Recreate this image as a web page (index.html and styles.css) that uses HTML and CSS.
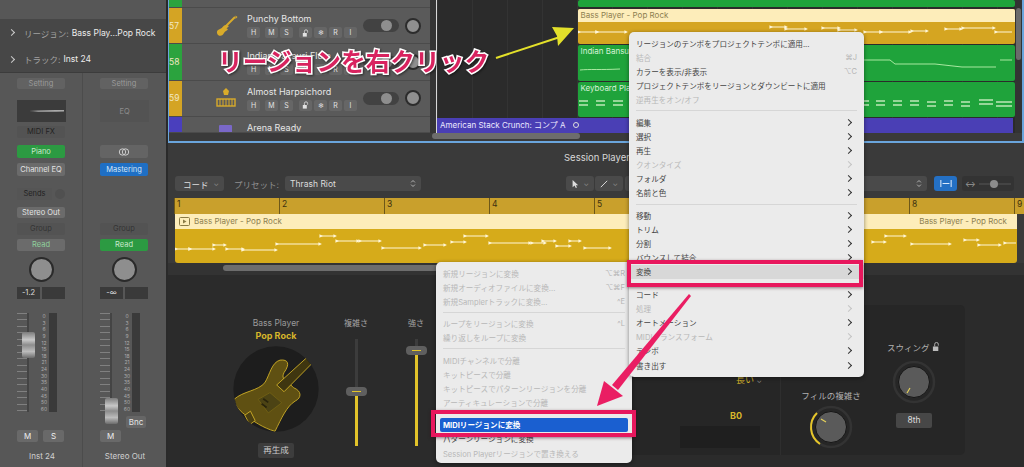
FILE: index.html
```html
<!DOCTYPE html>
<html lang="ja">
<head>
    <meta charset="UTF-8">
    <title>Session Player</title>
    <link rel="stylesheet" href="styles.css">
</head>
<body>
    <div class="app">
        <!-- left inspector -->
        <aside class="inspector">
            <div class="ins-top"></div>
            <div class="ins-row"><span class="ins-chev"></span><span class="ins-key">リージョン:</span><span class="ins-val">Bass Play...Pop Rock</span></div>
            <div class="ins-row ins-row-b"><span class="ins-chev"></span><span class="ins-key">トラック:</span><span class="ins-val">Inst 24</span></div>
            <div class="strips">
                <div class="strip">
                    <div class="btn setting">Setting</div>
                    <div class="eq-thumb"><svg viewBox="0 0 49 22" width="49" height="22"><path d="M12 11C24 10 36 10 47 10L47 11.5C34 12 22 12 12 11Z" fill="#aaa"/></svg></div>
                    <div class="btn midi">MIDI FX</div>
                    <div class="btn inst green">Piano</div>
                    <div class="btn chan light">Channel EQ</div>
                    <div class="sends"><div class="btn send-btn">Sends</div><span class="send-dot"></span></div>
                    <div class="btn out light">Stereo Out</div>
                    <div class="btn group">Group</div>
                    <div class="btn read read-off">Read</div>
                    <div class="knob-wrap"><span class="knob"></span></div>
                    <div class="values"><span class="val">-1.2</span><span class="val"></span></div>
                    <div class="fader">
                        <div class="ticks"></div>
                        <div class="fader-cap cap-a"></div>
                        <div class="scale"><span>0</span><span>3</span><span>6</span><span>9</span><span>12</span><span>15</span><span>18</span><span>21</span><span>24</span><span>30</span><span>35</span><span>40</span><span>45</span><span>50</span><span>60</span></div>
                        <div class="meter"></div>
                    </div>
                    <div class="ms"><div class="btn ms-btn">M</div><div class="btn ms-btn">S</div></div>
                    <div class="strip-name">Inst 24</div>
                </div>
                <div class="strip">
                    <div class="btn setting">Setting</div>
                    <div class="eq-thumb eq-empty">EQ</div>
                    <div class="btn midi hidden"></div>
                    <div class="btn inst link"><svg viewBox="0 0 12 8" width="12" height="8"><circle cx="4.5" cy="4" r="3.2" fill="none" stroke="#ccc"/><circle cx="7.5" cy="4" r="3.2" fill="none" stroke="#ccc"/></svg></div>
                    <div class="btn chan blue">Mastering</div>
                    <div class="sends hidden"><div class="btn send-btn"></div></div>
                    <div class="btn out hidden"></div>
                    <div class="btn group">Group</div>
                    <div class="btn read green">Read</div>
                    <div class="knob-wrap"><span class="knob"></span></div>
                    <div class="values"><span class="val">-∞</span><span class="val"></span></div>
                    <div class="fader">
                        <div class="ticks"></div>
                        <div class="fader-cap cap-b"></div>
                        <div class="scale"><span>0</span><span>3</span><span>6</span><span>9</span><span>12</span><span>15</span><span>18</span><span>21</span><span>24</span><span>30</span><span>35</span><span>40</span><span>45</span><span>50</span><span>60</span></div>
                        <div class="meter"></div>
                        <div class="btn bnc">Bnc</div>
                    </div>
                    <div class="ms"><div class="btn ms-btn">M</div></div>
                    <div class="strip-name">Stereo Out</div>
                </div>
            </div>
        </aside>

        <main class="main">
            <!-- arrange window -->
            <section class="arrange">
                <div class="arrange-body">
                    <div class="track-list">
                        <div class="track track-cut"><div class="track-num num-green"></div></div>
                        <div class="track">
                            <div class="track-num num-gold">57</div>
                            <div class="track-icon">
                                <svg viewBox="0 0 24 24" width="24" height="24"><path d="M21 3L11 13" stroke="#d9ab2a" stroke-width="2"/><path d="M21.5 1.5l2 1.5-2 2z" fill="#d9ab2a"/><path d="M12 11C9 11 9 14 6 15C3 16 2 18 4 21C7 23 9 21 10 19C11 17 13 17 14 15L12.5 14.5L15 12Z" fill="#d9ab2a"/></svg>
                            </div>
                            <div class="track-main">
                                <div class="track-name">Punchy Bottom</div>
                                <div class="track-btns"><span>H</span><span>M</span><span>S</span><span class="t-gap"><svg viewBox="0 0 10 10" width="8" height="8"><rect x="1" y="5" width="5" height="4.500" fill="#e2e2e2"/><path d="M3 5V3a2 2 0 0 1 4 0V4.500" fill="none" stroke="#e2e2e2"/></svg></span><span>❄</span><span>R</span><span>I</span></div>
                            </div>
                            <span class="pill"><i></i></span><span class="pan"></span>
                        </div>
                        <div class="track">
                            <div class="track-num num-green">58</div>
                            <div class="track-icon"></div>
                            <div class="track-main">
                                <div class="track-name">Indian Bansuri Flute</div>
                                <div class="track-btns"><span>H</span><span>M</span><span>S</span><span class="t-gap"><svg viewBox="0 0 10 10" width="8" height="8"><rect x="1" y="5" width="5" height="4.500" fill="#e2e2e2"/><path d="M3 5V3a2 2 0 0 1 4 0V4.500" fill="none" stroke="#e2e2e2"/></svg></span><span>❄</span><span>R</span><span>I</span></div>
                            </div>
                            <span class="pill"><i></i></span><span class="pan"></span>
                        </div>
                        <div class="track">
                            <div class="track-num num-gold">59</div>
                            <div class="track-icon">
                                <svg viewBox="0 0 24 24" width="24" height="24"><path d="M12 2l3 3-1 4h-4l-1-4z" fill="#d9ab2a"/><rect x="3" y="13" width="18" height="7" fill="none" stroke="#d9ab2a" stroke-width="1.4"/><path d="M6 13v7M9 13v7M12 13v7M15 13v7M18 13v7" stroke="#d9ab2a"/></svg>
                            </div>
                            <div class="track-main">
                                <div class="track-name">Almost Harpsichord</div>
                                <div class="track-btns"><span>H</span><span>M</span><span>S</span><span class="t-gap"><svg viewBox="0 0 10 10" width="8" height="8"><rect x="1" y="5" width="5" height="4.500" fill="#e2e2e2"/><path d="M3 5V3a2 2 0 0 1 4 0V4.500" fill="none" stroke="#e2e2e2"/></svg></span><span>❄</span><span>R</span><span>I</span></div>
                            </div>
                            <span class="pill"><i></i></span><span class="pan"></span>
                        </div>
                        <div class="track track-last">
                            <div class="track-num num-blue"></div>
                            <div class="track-icon"><svg viewBox="0 0 24 24" width="24" height="24"><rect x="5" y="8" width="13" height="11" rx="1" fill="#7a68c8"/></svg></div>
                            <div class="track-main"><div class="track-name">Arena Ready</div></div>
                        </div>
                    </div>
                    <div class="list-gap"></div>
                    <div class="timeline">
                        <div class="lane lane-top"><div class="region green-region cut"></div></div>
                        <div class="lane lane-57">
                            <div class="region bass-region">
                                <div class="region-head">Bass Player - Pop Rock</div>
                                <svg class="region-notes" viewBox="578 22 436 21" width="436" height="21" preserveAspectRatio="none">
                                    <defs><marker id="tick" viewBox="0 0 6 6" refX="1" refY="3" markerWidth="3.500" markerHeight="3.500"><path d="M0 0L6 3L0 6Z" fill="#fff6d6"/></marker></defs>
                                    <path class="note-line" d="M578 32H596M596 32H625M770 27H785M785 29H805M822 28H838M838 30H855M864 32H880M880 32H909M911 31H926M945 29H960M962 28H993M995 32H1012"/>
                                </svg>
                            </div>
                        </div>
                        <div class="lane lane-58">
                            <div class="region green-region">
                                <div class="green-head">Indian Bansuri Flute</div>
                                <svg class="region-notes" viewBox="578 0 436 35" width="436" height="35"><path d="M580 25C590 24 600 25 620 24M864 15H890L895 19H935L962 22H996M1000 15H1012" fill="none" stroke="#a8e8a0" stroke-width="1"/></svg>
                            </div>
                        </div>
                        <div class="lane lane-59">
                            <div class="region green-region">
                                <div class="green-head">Keyboard Player</div>
                                <svg class="region-notes" viewBox="578 0 436 34" width="436" height="34"><path d="M579 19h9M579 23h9M596 19h9M596 23h9M613 19h10M613 23h10M863 19h6M863 23h6M876 19h9M876 23h9M893 19h9M893 23h9M910 19h9M910 23h9M927 20h9M927 24h9M944 19h9M944 23h9M961 20h9M961 24h9M979 18h14M979 22h14M996 20h16M996 24h16" stroke="#bfe8b8" stroke-width="1.4"/></svg>
                            </div>
                        </div>
                        <div class="stack-band">American Stack Crunch: コンプ A <span class="stack-dot"></span></div>
                    </div>
                    <div class="vscroll"><span class="vthumb"></span></div>
                </div>
                <div class="hscroll"><span class="hthumb"></span></div>
            </section>

            <!-- session player editor -->
            <section class="session">
                <div class="session-title">Session Player</div>
                <div class="toolbar">
                    <div class="select sel-chord">コード<span class="caret">⌄</span></div>
                    <span class="preset-label">プリセット:</span>
                    <div class="select sel-preset">Thrash Riot<svg viewBox="0 0 8 12" width="6" height="9"><path d="M1.500 4.500L4 2l2.500 2.500M1.500 7.500L4 10l2.500-2.500" fill="none" stroke="#bbb" stroke-width="1.200"/></svg></div>
                    <div class="tool"><svg viewBox="0 0 10 12" width="8" height="10"><path d="M2 1v9l2.500-2 1.500 3 1.500-.7L6 7.500h3z" fill="#ddd"/></svg><span class="caret">⌄</span></div>
                    <div class="tool"><svg viewBox="0 0 10 10" width="8" height="8"><path d="M1 9L9 1" stroke="#ddd" stroke-width="1.2"/></svg><span class="caret">⌄</span></div>
                    <div class="select sel-snap"><svg viewBox="0 0 8 12" width="6" height="9"><path d="M1.500 4.500L4 2l2.500 2.500M1.500 7.500L4 10l2.500-2.500" fill="none" stroke="#bbb" stroke-width="1.200"/></svg></div>
                    <div class="catch"><svg viewBox="0 0 14 8" width="12" height="7"><path d="M1 0v8M13 0v8M3 4h8" stroke="#dbe9fb" stroke-width="1.200"/></svg></div>
                    <div class="zoom-box"><span class="zoom-arrows">↔</span><span class="zoom-track"><i></i></span></div>
                </div>
                <div class="ruler">
                    <span>1</span><span>2</span><span>3</span><span>4</span><span>5</span><span>6</span><span>7</span><span>8</span><span>9</span>
                </div>
                <div class="sp-region">
                    <div class="sp-head">
                        <span class="sp-label"><svg viewBox="0 0 11 9" width="11" height="9"><rect x=".5" y=".5" width="10" height="8" rx="1" fill="none" stroke="#8a7a45"/><path d="M4 2.500L7.500 4.500L4 6.500Z" fill="#8a7a45"/></svg>Bass Player - Pop Rock</span>
                        <span class="sp-label">Bass Player - Pop Rock</span>
                    </div>
                    <div class="sp-body">
                        <svg viewBox="176 229 842 34" width="842" height="34">
                            <path class="note-line" d="M176 249H190M190 249H214M214 245H225M227 249H243M243 250H276M277 244H320M321 236H335M337 241H358M360 241H380M383 248H420M425 245H445M452 242H465M465 236H487M490 243H530M532 243H545M543 241H555M557 246H570M570 241H580M585 248H610M873 242H885M886 236H905M912 244H950M965 240H978M979 245H1000M1005 243H1017"/>
                        </svg>
                    </div>
                </div>
                <div class="sp-scroll"><span class="sp-thumb"></span></div>

                <div class="player">
                    <div class="player-col">
                        <div class="player-name">Bass Player</div>
                        <div class="player-style">Pop Rock</div>
                        <svg class="player-art" viewBox="700 346 256 256" width="86" height="86">
                            <defs><clipPath id="disc"><circle cx="828" cy="474" r="127"/></clipPath></defs>
                            <circle cx="828" cy="474" r="127" fill="#1d1d1d"/>
                            <g clip-path="url(#disc)">
                                <path d="M703 505C730 480 775 480 795 455C810 430 815 395 840 388C865 385 870 400 852 425C845 440 850 445 865 455L880 470C905 480 905 500 885 510C860 525 845 560 825 600C790 590 760 570 735 550C715 535 705 520 703 505Z" fill="#5f5012" stroke="#d8b62a" stroke-width="2.500"/>
                                <path d="M775 505L810 485L845 515L805 545Z" fill="#4c4314" stroke="#857118" stroke-width="1.500"/>
                                <path d="M735 552L752 540L766 568L750 580Z" fill="#4a3f12" stroke="#d8b62a" stroke-width="2.500"/>
                                <path d="M790 503L805 514M785 518L800 529" stroke="#2a250c" stroke-width="5"/>
                                <path d="M830 462L918 382L935 398L852 482Z" fill="#3f3610" stroke="#d8b62a" stroke-width="2.500"/>
                            </g>
                        </svg>
                        <div class="regen">再生成</div>
                    </div>
                    <div class="slider-col slider-first">
                        <div class="slider-label">複雑さ</div>
                        <div class="slider"><span class="slider-fill fill-a"></span><span class="slider-thumb"></span></div>
                    </div>
                    <div class="slider-col">
                        <div class="slider-label">強さ</div>
                        <div class="slider slider-full"><span class="slider-fill fill-b"></span><span class="slider-thumb"></span></div>
                    </div>
                    <div class="pane">
                        <div class="pane-left">
                            <div class="pane-note">長い <span class="caret">⌄</span></div>
                            <div class="pane-key">B0</div>
                            <div class="pane-well"></div>
                        </div>
                        <div class="pane-right">
                            <div class="knob-col knob-col-fill">
                                <div class="knob-label">フィルの複雑さ</div>
                                <svg class="big-knob" viewBox="0 0 44 44" width="44" height="44">
                                    <circle cx="22" cy="22" r="20" fill="none" stroke="#333" stroke-width="2.500"/>
                                    <path d="M8 8A20 20 0 0 0 11 39" fill="none" stroke="#e6c62a" stroke-width="2"/>
                                    <circle cx="22" cy="22" r="15.500" fill="#5a5a5a" stroke="#161616" stroke-width="1"/>
                                    <path d="M12 14l5 3" stroke="#e6d25a" stroke-width="1.200"/>
                                </svg>
                            </div>
                            <div class="knob-col knob-col-swing">
                                <div class="knob-label">スウィング <svg viewBox="0 0 10 10" width="9" height="9"><rect x="1" y="5" width="6" height="5" fill="#bbb"/><path d="M3 5V2.500a2 2 0 0 1 4 0V4" fill="none" stroke="#bbb"/></svg></div>
                                <svg class="big-knob" viewBox="0 0 44 44" width="44" height="44">
                                    <circle cx="22" cy="22" r="20" fill="none" stroke="#333" stroke-width="2.500"/>
                                    <circle cx="22" cy="22" r="15.500" fill="#5a5a5a" stroke="#161616" stroke-width="1"/>
                                    <path d="M15 33l3-5" stroke="#e6d25a" stroke-width="1.200"/>
                                </svg>
                                <div class="swing-val">8th</div>
                            </div>
                        </div>
                    </div>
                </div>
            </section>
        </main>
    </div>

    <!-- convert submenu -->
    <div class="menu submenu">
        <div class="item off"><span>新規リージョンに変換</span><em>⌥⌘R</em></div>
        <div class="item off"><span>新規オーディオファイルに変換...</span><em>⌥⌘F</em></div>
        <div class="item off"><span>新規Samplerトラックに変換...</span><em>^E</em></div>
        <div class="sep"></div>
        <div class="item off"><span>ループをリージョンに変換</span><em>^L</em></div>
        <div class="item off"><span>繰り返しをループに変換</span></div>
        <div class="sep"></div>
        <div class="item off"><span>MIDIチャンネルで分離</span></div>
        <div class="item off"><span>キットピースで分離</span></div>
        <div class="item off"><span>キットピースでパターンリージョンを分離</span></div>
        <div class="item off"><span>アーティキュレーションで分離</span></div>
        <div class="sep"></div>
        <div class="item active"><span>MIDIリージョンに変換</span></div>
        <div class="item"><span>パターンリージョンに変換</span></div>
        <div class="item off"><span>Session Playerリージョンで置き換える</span></div>
    </div>

    <!-- region context menu -->
    <div class="menu ctx">
        <div class="item"><span>リージョンのテンポをプロジェクトテンポに適用...</span></div>
        <div class="item off"><span>結合</span><em>⌘J</em></div>
        <div class="item"><span>カラーを表示/非表示</span><em>⌥C</em></div>
        <div class="item"><span>プロジェクトテンポをリージョンとダウンビートに適用</span></div>
        <div class="item off"><span>逆再生をオン/オフ</span></div>
        <div class="sep"></div>
        <div class="item sub"><span>編集</span></div>
        <div class="item sub"><span>選択</span></div>
        <div class="item sub"><span>再生</span></div>
        <div class="item sub off"><span>クオンタイズ</span></div>
        <div class="item sub"><span>フォルダ</span></div>
        <div class="item sub"><span>名前と色</span></div>
        <div class="sep"></div>
        <div class="item sub"><span>移動</span></div>
        <div class="item sub"><span>トリム</span></div>
        <div class="item sub"><span>分割</span></div>
        <div class="item sub"><span>バウンスして結合</span></div>
        <div class="item sub picked"><span>変換</span></div>
        <div class="sep"></div>
        <div class="item sub"><span>コード</span></div>
        <div class="item sub off"><span>処理</span></div>
        <div class="item sub"><span>オートメーション</span></div>
        <div class="item sub off"><span>MIDIトランスフォーム</span></div>
        <div class="item sub"><span>テンポ</span></div>
        <div class="item sub"><span>書き出す</span></div>
    </div>

    <!-- annotations drawn over the screenshot -->
    <div class="mark mark-convert"></div>
    <div class="mark mark-midi"></div>
    <div class="callout">リージョンを右クリック</div>
    <svg class="arrows" viewBox="0 0 1024 467" width="1024" height="467">
        <path d="M496 58L560 37" stroke="#e3e02a" stroke-width="2" fill="none"/>
        <path d="M574 28L552 27L557 36L558 46Z" fill="#e3e02a"/>
        <path d="M689 294L691 296L618 390L612 385Z" fill="#ea1e63"/>
        <path d="M597 406L604 381L623 396Z" fill="#ea1e63"/>
    </svg>
</body>
</html>
```

FILE: styles.css
```css
* {
    box-sizing: border-box;
}

html, body {
    margin: 0;
    width: 1024px;
    height: 467px;
    overflow: hidden;
    background-color: #2b2b2b;
    font-family: 'Inter', 'Noto Sans CJK JP', sans-serif;
    color: #ddd;
}

body {
    position: relative;
}

.app {
    display: flex;
    height: 467px;
}

/* inspector */
.inspector {
    width: 168px;
    flex-shrink: 0;
    background-color: #575757;
    border-right: 2px solid #2a2a2a;
}

.ins-top {
    height: 19px;
}

.ins-row {
    height: 27px;
    display: flex;
    align-items: center;
    gap: 3px;
    padding-left: 9px;
    background-color: #474747;
    font-size: 8.5px;
    white-space: nowrap;
}

.ins-row-b {
    border-bottom: 1px solid #3c3c3c;
}

.ins-chev {
    width: 5px;
    height: 5px;
    margin-right: 7px;
    border-top: 1px solid #ccc;
    border-right: 1px solid #ccc;
    transform: rotate(45deg);
}

.ins-key {
    color: #a2a2a2;
}

.ins-val {
    color: #ececec;
}

.strips {
    display: flex;
    height: 394px;
}

.strip {
    width: 84px;
    padding: 5px 0 0 17px;
    border-right: 1px solid #4c4c4c;
}

.strip:last-child {
    border-right: 0;
}

.btn {
    width: 48px;
    height: 12px;
    display: flex;
    align-items: center;
    justify-content: center;
    background-color: #626262;
    color: #9b9b9b;
    font-size: 7.5px;
    border-radius: 2px;
    line-height: 1;
    white-space: nowrap;
}

.hidden {
    visibility: hidden;
}

.setting {
    height: 11px;
}

.eq-thumb {
    width: 49px;
    height: 22px;
    margin-top: 11px;
    background-color: #3b3b3b;
}

.eq-empty {
    background-color: #535353;
    color: #8e8e8e;
    font-size: 7.5px;
    display: flex;
    align-items: center;
    justify-content: center;
}

.midi {
    margin-top: 4px;
    background-color: #535353;
    color: #222;
}

.inst {
    height: 13px;
    margin-top: 7px;
}

.green {
    background-color: #2c9a42;
    color: #c8e8cc;
}

.link {
    background-color: #646464;
}

.chan {
    height: 13px;
    margin-top: 5px;
}

.light {
    background-color: #6b6b6b;
    color: #e4e4e4;
}

.blue {
    background-color: #1f6fc4;
    color: #d5e6f7;
}

.sends {
    display: flex;
    align-items: center;
    gap: 3px;
    margin-top: 12px;
}

.send-btn {
    width: 35px;
    background-color: #555;
    color: #222;
}

.send-dot {
    width: 10px;
    height: 10px;
    border-radius: 50%;
    background-color: #505050;
}

.out {
    height: 11px;
    margin-top: 7px;
}

.group {
    margin-top: 5px;
    background-color: #535353;
    color: #333;
}

.read {
    margin-top: 4px;
}

.read-off {
    background-color: #6b6b6b;
    color: #8fd09c;
}

.read.green {
    color: #c8e8cc;
}

.knob-wrap {
    width: 48px;
    margin-top: 6px;
    display: flex;
    justify-content: center;
}

.knob {
    width: 25px;
    height: 25px;
    border-radius: 50%;
    background-color: #8e8e8e;
    border: 2px solid #2a2a2a;
}

.values {
    display: flex;
    gap: 2px;
    margin-top: 5px;
}

.val {
    width: 23px;
    height: 12px;
    background-color: #3a3a3a;
    color: #ddd;
    font-size: 7.5px;
    text-align: center;
    line-height: 12px;
}

.fader {
    position: relative;
    display: flex;
    width: 48px;
    height: 99px;
    margin-top: 14px;
}

.ticks {
    width: 12px;
    height: 99px;
    margin-right: 11px;
    background: repeating-linear-gradient(to bottom, #808080 0 1px, transparent 1px 6.5px);
    border-right: 2px solid #444;
}

.fader-cap {
    position: absolute;
    left: 5px;
    width: 13px;
    height: 26px;
    border-radius: 2px;
    background: linear-gradient(to bottom, #7c7c7c, #c8c8c8 30%, #8c8c8c 50%, #bcbcbc 75%, #6c6c6c);
}

.cap-a {
    top: 19px;
}

.cap-b {
    top: 85px;
}

.scale {
    width: 8px;
    height: 99px;
    display: flex;
    flex-direction: column;
    justify-content: space-between;
    font-size: 5px;
    line-height: 6px;
    color: #aaa;
    text-align: center;
}

.meter {
    width: 8px;
    height: 99px;
    margin-left: 1px;
    background-color: #3a3a3a;
}

.bnc {
    position: absolute;
    left: 26px;
    top: 103px;
    width: 20px;
    height: 12px;
    background-color: #666;
    color: #e6e6e6;
    font-size: 8px;
}

.ms {
    display: flex;
    gap: 5px;
    margin-top: 18px;
}

.ms-btn {
    width: 21px;
    background-color: #696969;
    color: #eee;
    font-size: 8px;
}

.strip-name {
    width: 50px;
    margin-top: 9px;
    text-align: center;
    font-size: 8px;
    color: #d0d0d0;
}

/* arrange */
.main {
    flex: 1;
    min-width: 0;
    display: flex;
    flex-direction: column;
}

.arrange {
    height: 143px;
    flex-shrink: 0;
    background-color: #3a3a3a;
    border: solid #6aa5dc;
    border-width: 0 2px 2px 1px;
}

.arrange-body {
    display: flex;
    height: 133px;
}

.track-list {
    width: 261px;
    flex-shrink: 0;
    background-color: #5a5a5a;
}

.track {
    display: flex;
    align-items: center;
    height: 36.4px;
    border-bottom: 1px solid #4b4b4b;
    position: relative;
}

.track-cut {
    height: 8px;
}

.track-last {
    height: 16px;
    overflow: hidden;
    align-items: flex-start;
}

.track-last .track-main {
    padding-top: 5px;
}

.track-num {
    width: 13px;
    height: 100%;
    flex-shrink: 0;
    font-size: 8.5px;
    color: #f2e7c2;
    display: flex;
    align-items: center;
}

.num-gold {
    background-color: #d4a424;
}

.num-green {
    background-color: #2ba33e;
}

.num-blue {
    background-color: #4a3fbd;
}

.track-icon {
    width: 24px;
    height: 24px;
    margin: 0 9px 0 32px;
    flex-shrink: 0;
}

.track-main {
    width: 112px;
    flex-shrink: 0;
}

.track-name {
    font-size: 9px;
    line-height: 11px;
    color: #e6e6e6;
    white-space: nowrap;
}

.track-btns {
    display: flex;
    gap: 2px;
    margin-top: 3px;
}

.track-btns span {
    width: 13px;
    height: 11px;
    display: flex;
    align-items: center;
    justify-content: center;
    background-color: #666;
    border-radius: 2px;
    font-size: 7px;
    line-height: 11px;
    color: #e2e2e2;
}

.track-btns span:nth-child(2) {
    margin-left: 3px;
}

.track-btns .t-gap {
    margin-left: 4px;
}

.pill {
    width: 36px;
    height: 13px;
    margin-left: 4px;
    background-color: #424242;
    border-radius: 7px;
    display: flex;
    align-items: center;
    justify-content: flex-end;
    padding-right: 7px;
    flex-shrink: 0;
}

.pill i {
    width: 11px;
    height: 11px;
    border-radius: 50%;
    background-color: #8e8e8e;
}

.pan {
    width: 16px;
    height: 16px;
    margin-left: 6px;
    border-radius: 50%;
    background-color: #8f8f8f;
    border: 2px solid #2c2c2c;
    flex-shrink: 0;
}

.list-gap {
    width: 6px;
    flex-shrink: 0;
    background-color: #353535;
}

.timeline {
    flex: 1;
    min-width: 0;
    background-color: #2b2b2b;
    background-image: repeating-linear-gradient(to right, #333 0 1px, transparent 1px 35px);
    border-left: 1.5px solid #d8d8d8;
    display: flex;
    flex-direction: column;
    padding-left: 140.5px;
}

.lane {
    flex-shrink: 0;
}

.lane-top {
    height: 9px;
}

.lane-57 {
    height: 36px;
}

.lane-58 {
    height: 37px;
}

.lane-59 {
    height: 36px;
}

.region {
    height: calc(100% - 1px);
    border-radius: 2px;
    overflow: hidden;
    position: relative;
}

.green-region {
    background-color: #1fa33b;
}

.cut {
    height: 7px;
}

.green-head {
    font-size: 8px;
    line-height: 13px;
    padding-left: 3px;
    color: #d8f2d8;
}

.bass-region {
    background-color: #d5a521;
}

.region-head {
    height: 13px;
    background-color: #fdedba;
    color: #8d8050;
    font-size: 8px;
    line-height: 13px;
    padding-left: 3px;
}

.region-notes {
    position: absolute;
    left: 0;
}

.bass-region .region-notes {
    top: 13px;
}

.green-region .region-notes {
    top: 0;
}

.note-line {
    fill: none;
    stroke: #fff6d6;
    stroke-width: 1;
    marker-start: url(#tick);
    marker-mid: url(#tick);
}

.stack-band {
    height: 15px;
    width: 576px;
    margin-left: -140.5px;
    background-color: #4a3fb5;
    color: #ece9ff;
    font-size: 8px;
    line-height: 15px;
    padding-left: 3px;
    white-space: nowrap;
}

.stack-dot {
    display: inline-block;
    width: 6px;
    height: 6px;
    margin-left: 5px;
    border: 1px solid #ddd;
    border-radius: 50%;
}

.vscroll {
    width: 7px;
    flex-shrink: 0;
    padding: 8px 0 0 1px;
    background-color: #333;
}

.vthumb {
    display: block;
    width: 5px;
    height: 52px;
    border-radius: 3px;
    background-color: #6b6b6b;
}

.hscroll {
    height: 8px;
    padding-left: 263px;
    background-color: #3a3a3a;
}

.hthumb {
    display: block;
    width: 148px;
    height: 6px;
    border-radius: 3px;
    background-color: #6d6d6d;
}

/* session player */
.session {
    flex: 1;
    min-height: 0;
    background-color: #3a3a3a;
}

.session-title {
    height: 33px;
    padding: 8px 0 0 396px;
    font-size: 9.5px;
    line-height: 13px;
    color: #d8d8d8;
}

.toolbar {
    display: flex;
    align-items: center;
    height: 15px;
    padding-left: 7px;
    font-size: 8.5px;
}

.select {
    height: 15px;
    display: flex;
    align-items: center;
    background-color: #4a4a4a;
    border-radius: 3px;
    color: #ddd;
    white-space: nowrap;
}

.sel-chord {
    width: 49px;
    justify-content: space-between;
    padding: 0 5px 0 8px;
}

.caret {
    color: #8a8a8a;
    font-size: 7px;
    line-height: 1;
}

.preset-label {
    width: 51px;
    margin-left: 10px;
    color: #909090;
}

.sel-preset {
    width: 136px;
    justify-content: space-between;
    padding: 0 5px;
}

.tool {
    width: 28px;
    height: 15px;
    margin-left: 1px;
    display: flex;
    align-items: center;
    justify-content: space-around;
    padding: 0 3px;
    background-color: #4a4a4a;
    border-radius: 3px;
}

.sel-preset + .tool {
    margin-left: 145px;
}

.sel-snap {
    width: 302px;
    justify-content: flex-end;
    padding-right: 5px;
    margin-left: 2px;
}

.catch {
    width: 23px;
    height: 15px;
    margin-left: 7px;
    display: flex;
    align-items: center;
    justify-content: center;
    background-color: #2470c4;
    border-radius: 3px;
}

.zoom-box {
    width: 52px;
    height: 15px;
    margin-left: 5px;
    display: flex;
    align-items: center;
    gap: 3px;
    padding-left: 3px;
    background-color: #333;
    border-radius: 3px;
    font-size: 8px;
    color: #999;
}

.zoom-track {
    position: relative;
    width: 32px;
    height: 2px;
    background-color: #444;
}

.zoom-track i {
    position: absolute;
    left: 11px;
    top: -3px;
    width: 8px;
    height: 8px;
    border-radius: 50%;
    background-color: #8c8c8c;
}

.ruler {
    display: flex;
    height: 16px;
    margin: 7px 0 0 6px;
    overflow: hidden;
    background-color: #c9a02c;
    font-size: 8.5px;
    color: #3d3110;
}

.ruler span {
    width: 105px;
    flex-shrink: 0;
    padding-left: 2px;
    border-left: 1px solid #6e5819;
    line-height: 13px;
}

.ruler span:last-child {
    width: 9px;
}

.sp-region {
    width: 842px;
    margin-left: 7px;
}

.sp-head {
    display: flex;
    justify-content: space-between;
    height: 15px;
    padding: 0 10px 0 4px;
    background-color: #fdedba;
    color: #8d8050;
    font-size: 8px;
    line-height: 15px;
}

.sp-label {
    display: flex;
    align-items: center;
    gap: 4px;
}

.sp-body {
    height: 34px;
    background-color: #d6ab1a;
    border-radius: 0 0 3px 3px;
    overflow: hidden;
}

.sp-body svg {
    display: block;
}

.sp-scroll {
    height: 12px;
    padding: 2px 0 0 55px;
    background-color: #333;
}

.sp-thumb {
    display: block;
    width: 420px;
    height: 6px;
    border-radius: 3px;
    background-color: #6d6d6d;
}

.player {
    display: flex;
    height: 192px;
    padding-left: 60px;
    background-color: #2b2b2b;
}

.player-col {
    width: 96px;
    padding-top: 42px;
    display: flex;
    flex-direction: column;
    align-items: center;
}

.player-name {
    font-size: 8.5px;
    line-height: 12px;
    color: #9a9a9a;
}

.player-style {
    font-size: 9px;
    font-weight: 700;
    line-height: 13px;
    color: #d8b62a;
}

.player-art {
    margin-top: 4px;
}

.regen {
    width: 36px;
    height: 15px;
    margin-top: 11px;
    background-color: #3d3d3d;
    border-radius: 2px;
    font-size: 8.5px;
    line-height: 15px;
    text-align: center;
    color: #ccc;
}

.slider-col {
    width: 60px;
    padding-top: 42px;
    display: flex;
    flex-direction: column;
    align-items: center;
}

.slider-first {
    margin-left: 2px;
}

.slider-label {
    font-size: 8px;
    line-height: 12px;
    color: #a4a4a4;
}

.slider {
    position: relative;
    width: 3px;
    height: 107px;
    margin-top: 10px;
    background-color: #3c3c3c;
}

.slider-fill {
    position: absolute;
    left: 0;
    bottom: 0;
    width: 3px;
    background-color: #e2c32a;
}

.fill-a {
    height: 56px;
}

.fill-b {
    height: 95px;
}

.slider-thumb {
    position: absolute;
    left: -9px;
    width: 21px;
    height: 9px;
    border-radius: 4px;
    background-color: #5f5f5f;
    top: 48px;
}

.slider-thumb::after {
    content: '';
    position: absolute;
    left: 6px;
    top: 4px;
    width: 9px;
    height: 1px;
    background-color: #e2c32a;
}

.slider-full .slider-thumb {
    top: 7px;
}

.pane {
    display: flex;
    height: 150px;
    margin: 30px 0 0 44px;
    width: 475px;
    border-radius: 5px;
    background-color: #262626;
}

.pane-left {
    width: 290px;
    position: relative;
    padding: 69px 0 0 190px;
}

.pane-note {
    padding-left: 56px;
    font-size: 9px;
    line-height: 12px;
    color: #d8b62a;
    white-space: nowrap;
}

.pane-key {
    padding-left: 50px;
    margin-top: 24px;
    font-size: 9px;
    line-height: 12px;
    font-weight: 700;
    color: #d8b62a;
}

.pane-well {
    width: 80px;
    height: 22px;
    margin-top: 4px;
    background-color: #1f1f1f;
}

.pane-right {
    display: flex;
    flex: 1;
    border-left: 1px solid #2e2e2e;
}

.knob-col {
    display: flex;
    flex-direction: column;
    align-items: center;
}

.knob-label {
    font-size: 8.5px;
    line-height: 12px;
    color: #b0b0b0;
    white-space: nowrap;
}

.knob-col-fill {
    width: 100px;
    padding-top: 85px;
}

.knob-col-swing {
    width: 66px;
    padding-top: 37px;
}

.knob-col-fill .big-knob {
    margin-top: 3px;
}

.knob-col-swing .big-knob {
    margin-top: 6px;
}

.swing-val {
    width: 36px;
    height: 15px;
    margin-top: 9px;
    background-color: #474747;
    border-radius: 2px;
    font-size: 8.5px;
    line-height: 15px;
    text-align: center;
    color: #ddd;
}

/* menus */
.menu {
    position: absolute;
    background-color: #ebebeb;
    border-radius: 5px;
    box-shadow: 0 1px 4px rgba(0, 0, 0, 0.45);
    padding: 4px 0;
    color: #444;
    font-size: 7.6px;
}

.ctx {
    left: 629px;
    top: 32px;
    width: 235px;
    height: 345px;
}

.submenu {
    left: 436px;
    top: 262px;
    width: 196px;
    height: 201px;
}

.item {
    position: relative;
    display: flex;
    justify-content: space-between;
    align-items: center;
    height: 14.2px;
    padding: 0 7px;
    white-space: nowrap;
}

.item em {
    font-style: normal;
    color: #b4b4b4;
    font-size: 7.5px;
}

.off {
    color: #b8b8b8;
}

.sub::after {
    content: '';
    width: 4px;
    height: 4px;
    margin-right: 6px;
    border-top: 1.4px solid #333;
    border-right: 1.4px solid #333;
    transform: rotate(45deg);
}

.sub.off::after {
    border-color: #c4c4c4;
}

.sep {
    height: 1px;
    margin: 3.5px 7px;
    background-color: #d6d6d6;
}

.picked {
    background-color: #d8d8d8;
}

.active {
    margin: 0 4px;
    padding: 0 3px;
    border-radius: 2px;
    background-color: #1a5fd0;
    color: #fff;
    font-weight: 700;
}

/* annotations */
.mark {
    position: absolute;
    border: 4px solid #e8175d;
    box-shadow: 0 1px 3px rgba(60, 0, 20, 0.5);
}

.mark-convert {
    left: 627px;
    top: 260px;
    width: 236px;
    height: 27px;
}

.mark-midi {
    left: 431px;
    top: 410px;
    width: 205px;
    height: 27px;
}

.callout {
    position: absolute;
    left: 218px;
    top: 44px;
    font-size: 24.7px;
    line-height: 36px;
    font-weight: 700;
    white-space: nowrap;
    color: #d8235f;
    -webkit-text-stroke: 3px #fff;
    paint-order: stroke fill;
    filter: drop-shadow(1px 1px 1px rgba(0, 0, 0, 0.5));
}

.arrows {
    position: absolute;
    left: 0;
    top: 0;
    pointer-events: none;
}
```
